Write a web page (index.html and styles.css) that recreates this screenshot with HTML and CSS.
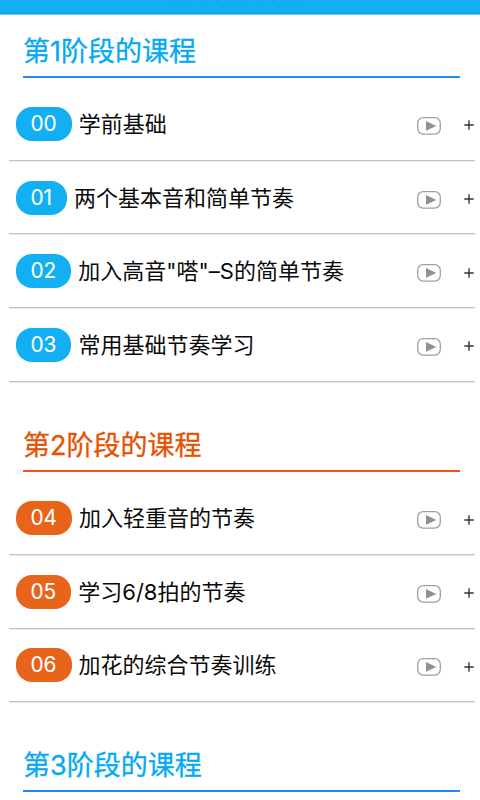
FILE: index.html
```html
<!DOCTYPE html>
<html lang="zh-CN">
<head>
    <meta charset="UTF-8">
    <meta name="viewport" content="width=device-width, initial-scale=1.0">
    <title>课程列表</title>
    <link rel="stylesheet" href="styles.css">
</head>
<body>
    <svg class="sprite" aria-hidden="true">
        <symbol id="play" viewBox="0 0 24 18">
            <rect x="0.7" y="0.7" width="22.6" height="16.4" rx="5.5" fill="none" stroke="#a0a0a0" stroke-width="1.3"/>
            <path d="M9 4L19.3 8.9L9 13.8Z" fill="#919191"/>
        </symbol>
        <symbol id="plus" viewBox="0 0 10 10">
            <path d="M5 0.3V9.7M0.3 5H9.7" stroke="#333" stroke-width="1.4"/>
        </symbol>
    </svg>

    <header class="topbar"></header>

    <main>
        <section class="stage">
            <h2>第1阶段的课程</h2>
            <ul class="lessons">
                <li><span class="badge">00</span><span class="name">学前基础</span><svg class="play"><use href="#play"/></svg><svg class="plus"><use href="#plus"/></svg></li>
                <li><span class="badge">01</span><span class="name">两个基本音和简单节奏</span><svg class="play"><use href="#play"/></svg><svg class="plus"><use href="#plus"/></svg></li>
                <li><span class="badge">02</span><span class="name">加入高音"嗒"–S的简单节奏</span><svg class="play"><use href="#play"/></svg><svg class="plus"><use href="#plus"/></svg></li>
                <li><span class="badge">03</span><span class="name">常用基础节奏学习</span><svg class="play"><use href="#play"/></svg><svg class="plus"><use href="#plus"/></svg></li>
            </ul>
        </section>

        <section class="stage orange">
            <h2>第2阶段的课程</h2>
            <ul class="lessons">
                <li><span class="badge">04</span><span class="name">加入轻重音的节奏</span><svg class="play"><use href="#play"/></svg><svg class="plus"><use href="#plus"/></svg></li>
                <li><span class="badge">05</span><span class="name">学习6/8拍的节奏</span><svg class="play"><use href="#play"/></svg><svg class="plus"><use href="#plus"/></svg></li>
                <li><span class="badge">06</span><span class="name">加花的综合节奏训练</span><svg class="play"><use href="#play"/></svg><svg class="plus"><use href="#plus"/></svg></li>
            </ul>
        </section>

        <section class="stage">
            <h2>第3阶段的课程</h2>
        </section>
    </main>
</body>
</html>
```

FILE: styles.css
```css
* {
    box-sizing: border-box;
}

body {
    margin: 0;
    height: 800px;
    overflow: hidden;
    background: #fff;
    color: #0a0a0a;
    font-family: Inter, "Noto Sans CJK SC", sans-serif;
}

.sprite {
    display: none;
}

.topbar {
    height: 14px;
    background: #12b0f3;
    border-bottom: 1px solid #00a2ee;
    box-shadow: 0 1px 0 #72d0f8;
}

.topbar::before {
    content: "";
    display: block;
    width: 132px;
    height: 1px;
    margin-left: 174px;
    background: repeating-linear-gradient(90deg, #00a5ef 0 3px, #12b0f3 3px 14px);
}

.stage {
    --main: #12b0f3;
    --title: #03a9f4;
    --line: #2488fa;
}

.stage.orange {
    --main: #e8641b;
    --title: #e65100;
    --line: #f4511e;
}

.stage h2 {
    height: 63.5px;
    margin: 0 20px 0 23px;
    padding-top: 18px;
    border-bottom: 2px solid var(--line);
    color: var(--title);
    font-size: 27px;
    font-weight: 400;
    line-height: 40px;
    -webkit-text-stroke: 0.3px var(--title);
}

.stage + .stage h2 {
    height: 90px;
    padding-top: 44px;
}

.lessons {
    list-style: none;
    margin: 0 5px 0 9px;
    padding: 9.5px 0 0;
}

.lessons li {
    display: flex;
    align-items: center;
    height: 73.7px;
    padding: 1px 1px 0 6.5px;
    border-bottom: 1.5px solid #c4c4c4;
    box-shadow: 0 1px 0 #e9e9e9;
}

.badge {
    height: 34px;
    padding: 0 15px;
    border-radius: 16px;
    background: var(--main);
    color: #fff;
    font-size: 20.8px;
    line-height: 34px;
    -webkit-text-stroke: 0.1px #fff;
}

.name {
    flex: 1;
    margin-left: 7px;
    font-size: 22px;
    line-height: 34px;
    white-space: nowrap;
}

.play {
    width: 24px;
    height: 18px;
    margin: 4px 23px 0 0;
}

.plus {
    width: 10px;
    height: 10px;
    margin-top: 3px;
}
```
